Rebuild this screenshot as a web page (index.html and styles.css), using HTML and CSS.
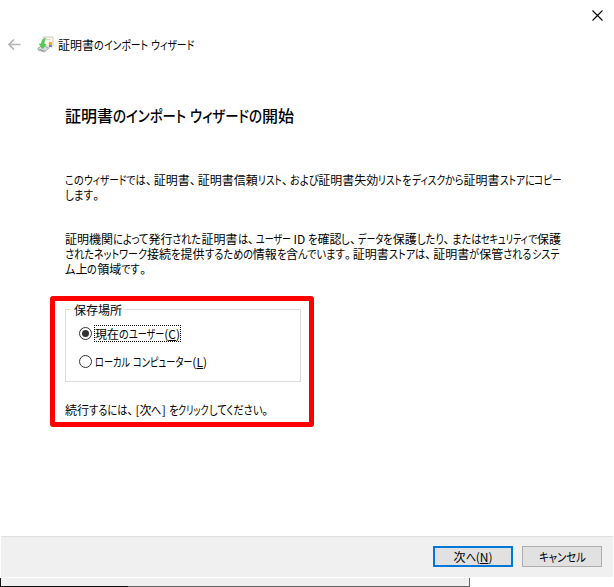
FILE: index.html
```html
<!DOCTYPE html>
<html lang="ja">
<head>
<meta charset="utf-8">
<title>証明書のインポート ウィザード</title>
<link rel="stylesheet" href="styles.css">
</head>
<body>
<div class="window">
  <div class="caption">
    <svg class="close" viewBox="0 0 11 11"><path d="M.5.5l10 10M10.5.5l-10 10"/></svg>
  </div>
  <header class="titlebar">
    <svg class="back" viewBox="0 0 13 11"><path d="M12.5 5.5H1.5M6 .5L1 5.5L6 10.500"/></svg>
    <svg class="cert" viewBox="0 0 17 17">
      <path d="M6 1h10v9H6z" fill="#faf7ee" stroke="#d3cdbb"/>
      <path d="M8 3.500h6" stroke="#e0dac9"/>
      <path d="M1 12l4-2.500 7 2.500-4.500 4L1 14z" fill="#d5d9dc" stroke="#9aa0a4" stroke-width=".8"/>
      <path d="M2.500 13.500l5 1.500" stroke="#7c858c" stroke-width=".8"/>
      <path d="M8.500 2C5.500 3 4.500 5 4.500 8H2.300l3.200 4.500L9 8.500H7.200C7 5.500 7.500 4 8.500 2z" fill="#4fd04c" stroke="#3dba42" stroke-width=".6"/>
      <path d="M12.300 8l-.3 3.500 1.400-.8 1.400.8-.3-3.500z" fill="#3c7fc4"/>
      <circle cx="13.400" cy="7.500" r="1.700" fill="#f2a51e"/>
    </svg>
    <span class="fit" data-width="136">証明書のインポート ウィザード</span>
  </header>
  <main class="page">
    <h1><span class="fit" data-width="229">証明書のインポート ウィザードの開始</span></h1>
    <p class="intro">
      <span class="fit" data-width="497">このウィザードでは、証明書、証明書信頼リスト、および証明書失効リストをディスクから証明書ストアにコピー</span>
      <span class="fit" data-width="36">します。</span>
    </p>
    <p class="about">
      <span class="fit" data-width="496">証明機関によって発行された証明書は、ユーザー ID を確認し、データを保護したり、またはセキュリティで保護</span>
      <span class="fit" data-width="494">されたネットワーク接続を提供するための情報を含んでいます。証明書ストアは、証明書が保管されるシステ</span>
      <span class="fit" data-width="83">ム上の領域です。</span>
    </p>
    <section class="highlight">
      <fieldset>
        <legend>保存場所</legend>
        <label class="option"><i class="radio checked"></i><span class="focus"><span class="fit" data-width="85">現在のユーザー(<u>C</u>)</span></span></label>
        <label class="option"><i class="radio"></i><span class="plain"><span class="fit" data-width="112">ローカル コンピューター(<u>L</u>)</span></span></label>
      </fieldset>
      <p class="next-hint"><span class="fit" data-width="205">続行するには、[次へ] をクリックしてください。</span></p>
    </section>
  </main>
  <footer class="buttons">
    <button class="primary"><span class="fit" data-width="39">次へ(<u>N</u>)</span></button>
    <button><span class="fit" data-width="47">キャンセル</span></button>
  </footer>
</div>
<div class="behind"><div class="behind-edge"></div></div>
<script src="main.js"></script>
</body>
</html>
```
FILE: styles.css
```css
* { box-sizing: border-box; }
body {
  margin: 0;
  width: 614px;
  height: 587px;
  overflow: hidden;
  background: #fff;
  color: #000;
  font: 12px/15px "Noto Sans CJK JP", sans-serif;
}
p, h1 { margin: 0; }
.window { height: 577px; padding: 0 1px; display: flex; flex-direction: column; }
.caption { height: 29px; display: flex; justify-content: flex-end; padding: 10px 10px 0 0; }
.close { width: 11px; height: 11px; fill: none; stroke: #000; stroke-width: 1.1; }
.titlebar { height: 30px; display: flex; align-items: center; padding-left: 7px; }
.back { width: 13px; height: 11px; margin: 1px 16px 0 0; fill: none; stroke: #b5b5b5; stroke-width: 1.7; }
.cert { width: 17px; height: 17px; margin-right: 4px; fill: none; }
.page { flex: 1; padding: 44px 0 0 64px; }
h1 { font-size: 16px; line-height: 24px; font-weight: 500; }
.intro { margin-top: 45px; }
.about { margin-top: 29px; }
.fit { display: block; white-space: pre; }
.titlebar .fit, button .fit { display: inline-block; }
.kana { display: inline-block; transform-origin: 0 50%; white-space: pre; font-feature-settings: "palt"; }
.mark { display: inline-block; width: 8px; font-feature-settings: "palt"; }
.highlight {
  width: 264px;
  height: 131px;
  margin: 20px 0 0 -15px;
  padding: 1px 8px 0 11px;
  border: 5px solid #fe0000;
  border-radius: 3px;
}
fieldset {
  width: 236px;
  height: 80px;
  margin: 0 0 0 -1px;
  padding: 8px 0 0 13px;
  border: 1px solid #dcdcdc;
}
legend { margin-left: -8px; padding: 0 3px; line-height: 15px; }
.option { display: flex; align-items: center; height: 17px; margin-bottom: 11px; }
.radio { width: 13px; height: 13px; border: 1px solid #333; border-radius: 50%; display: grid; place-items: center; }
.checked::after { content: ""; width: 7px; height: 7px; border-radius: 50%; background: #333; }
.focus { height: 17px; margin-left: 2px; width: 87px; border: 1px dotted #000; }
.plain { margin-left: 3px; }
.next-hint { margin: 20px 0 0 -1px; }
.buttons {
  height: 41px;
  padding: 9px 11px 0 0;
  display: flex;
  justify-content: flex-end;
  gap: 9px;
  border-top: 1px solid #dfdfdf;
  background: #f0f0f0;
}
button {
  width: 80px;
  height: 21px;
  padding: 0;
  border: 1px solid #adadad;
  background: #e1e1e1;
  color: #000;
  font: inherit;
  line-height: 17px;
}
.primary { border: 2px solid #0078d7; }
.behind { width: 470px; height: 9px; margin-top: 1px; border-left: 1px solid #111; border-right: 1px solid #666; background: #f0f0f0; display: flex; align-items: flex-end; }
.behind-edge { width: 100%; height: 1px; background: linear-gradient(90deg, #111 127px, #666 127px); }
```
FILE: main.js
```js
// Condenses kana so that each line takes its UI width; kanji keep their full width.
const HIRAGANA = 0.85;
const RUNS = /([ぁ-ゖ]+)|([ァ-ヺー]+)|([、。])|([^ぁ-ゖァ-ヺー、。]+)/g;

function splitRuns(node) {
  const out = document.createDocumentFragment();
  for (const m of node.data.matchAll(RUNS)) {
    if (m[4]) {
      out.append(m[4]);
      continue;
    }
    const span = document.createElement('span');
    span.className = m[1] ? 'kana hira' : m[2] ? 'kana kata' : 'mark';
    span.textContent = m[0];
    out.append(span);
  }
  node.replaceWith(out);
}

const widthOf = (el) => el.getBoundingClientRect().width;
const total = (list) => list.reduce((sum, el) => sum + widthOf(el), 0);

for (const line of document.querySelectorAll('.fit')) {
  [...line.childNodes].filter((n) => n.nodeType === 3).forEach(splitRuns);
  const range = document.createRange();
  range.selectNodeContents(line);
  const hira = [...line.querySelectorAll('.hira')];
  const kata = [...line.querySelectorAll('.kata')];
  const h = total(hira);
  const k = total(kata);
  const room = line.dataset.width - (range.getBoundingClientRect().width - h - k);
  const hiraScale = k ? HIRAGANA : room / h;
  const kataScale = k ? (room - h * HIRAGANA) / k : 1;
  for (const [list, scale] of [[hira, hiraScale], [kata, kataScale]]) {
    for (const [el, w] of list.map((e) => [e, widthOf(e)])) {
      el.style.marginRight = `${w * (scale - 1)}px`;
      el.style.transform = `scaleX(${scale})`;
    }
  }
}
```
